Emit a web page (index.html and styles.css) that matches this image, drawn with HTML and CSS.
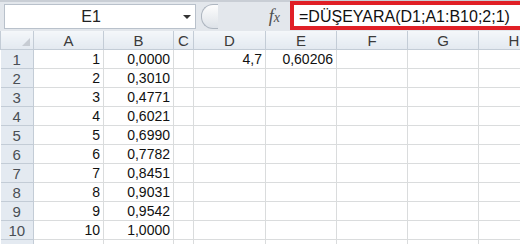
FILE: index.html
```html
<!DOCTYPE html>
<html lang="tr">
<head>
    <meta charset="UTF-8">
    <title>DÜŞEYARA</title>
    <link rel="stylesheet" href="styles.css">
</head>
<body>
    <div class="bar">
        <div class="namebox">
            <span class="name">E1</span>
            <span class="arrow"></span>
        </div>
        <div class="grip"></div>
        <div class="fx"><i>f</i><i class="sub">x</i></div>
        <div class="formula">=DÜŞEYARA(D1;A1:B10;2;1)</div>
    </div>
    <table class="sheet">
        <colgroup>
            <col class="c-row">
            <col class="c-a">
            <col class="c-b">
            <col class="c-c">
            <col class="c-d">
            <col class="c-e">
            <col class="c-f">
            <col class="c-g">
            <col class="c-h">
        </colgroup>
        <thead>
            <tr>
                <th class="corner"><span class="tri"></span></th>
                <th>A</th><th>B</th><th>C</th><th>D</th><th>E</th><th>F</th><th>G</th><th>H</th>
            </tr>
        </thead>
        <tbody id="rows"></tbody>
    </table>
    <script>
        let data = [
            [1, '0,0000', '4,7', '0,60206'],
            [2, '0,3010'],
            [3, '0,4771'],
            [4, '0,6021'],
            [5, '0,6990'],
            [6, '0,7782'],
            [7, '0,8451'],
            [8, '0,9031'],
            [9, '0,9542'],
            [10, '1,0000']
        ];
        let rows = document.querySelector('#rows');
        let str = '';
        data.forEach((r, i) => {
            str += `<tr><th>${i + 1}</th>
                <td>${r[0] || ''}</td><td>${r[1] || ''}</td><td></td>
                <td>${r[2] || ''}</td><td>${r[3] || ''}</td>
                <td></td><td></td><td></td></tr>`;
        });
        str += '<tr><th></th><td></td><td></td><td></td><td></td><td></td><td></td><td></td><td></td></tr>';
        rows.innerHTML = str;
    </script>
</body>
</html>
```

FILE: styles.css
```css
body {
    margin: 0;
    overflow: hidden;
    background-color: #fff;
    font-family: "Liberation Sans", Arial, sans-serif;
}

.bar {
    display: flex;
    align-items: center;
    height: 31px;
    background-color: #e3e7ec;
    border-top: 2px solid #c9ced5;
    box-sizing: border-box;
}

.namebox {
    position: relative;
    width: 192px;
    height: 25px;
    margin-left: 4px;
    background-color: #fff;
    border: 1px solid #b9c1cb;
    box-sizing: border-box;
    text-align: center;
    line-height: 23px;
    font-size: 16px;
    color: #222;
}

.name {
    margin-left: -18px;
}

.arrow {
    position: absolute;
    right: 4px;
    top: 10px;
    border-left: 4px solid transparent;
    border-right: 4px solid transparent;
    border-top: 4px solid #333;
}

.grip {
    width: 16px;
    height: 23px;
    margin-left: 5px;
    border: 1px solid #aeb6c0;
    border-right: none;
    border-radius: 12px 0 0 12px;
    background: linear-gradient(#fdfdfd, #dde2e8);
}

.fx {
    width: 72px;
    text-align: right;
    padding-right: 10px;
    box-sizing: border-box;
    font-family: "Liberation Serif", serif;
    font-size: 18px;
    color: #4f4f4f;
}

.fx .sub {
    font-size: 14px;
}

.formula {
    flex: 1;
    height: 29px;
    margin-top: -2px;
    border: 4px solid #e01f26;
    border-right: none;
    box-sizing: border-box;
    background-color: #fff;
    padding-left: 5px;
    line-height: 23px;
    font-size: 16px;
    color: #111;
    white-space: nowrap;
}

.sheet {
    border-collapse: collapse;
    table-layout: fixed;
    width: 549px;
    font-size: 14px;
}

.c-row { width: 33px; }
.c-a { width: 70px; }
.c-b { width: 70px; }
.c-c { width: 20px; }
.c-d { width: 72px; }
.c-e { width: 71px; }
.c-f { width: 71px; }
.c-g { width: 71px; }
.c-h { width: 71px; }

.sheet th,
.sheet td {
    height: 18px;
    padding: 0 3px;
    border: 1px solid #dadcdd;
    white-space: nowrap;
    overflow: hidden;
}

.sheet thead th {
    font-weight: normal;
    font-size: 15px;
    color: #3b3b3b;
    background: linear-gradient(#f4f7fa, #e3e9f0);
    border-color: #c3ccd6;
    border-top: none;
}

.sheet tbody th {
    font-weight: normal;
    font-size: 15px;
    color: #4a4f55;
    background-color: #e4eaf1;
    border-color: #c3ccd6;
    border-left: none;
    text-align: center;
}

.sheet td {
    text-align: right;
    color: #111;
}

.corner {
    position: relative;
}

.tri {
    position: absolute;
    right: 3px;
    bottom: 3px;
    border-left: 8px solid transparent;
    border-bottom: 8px solid #c7ccd3;
}
```
